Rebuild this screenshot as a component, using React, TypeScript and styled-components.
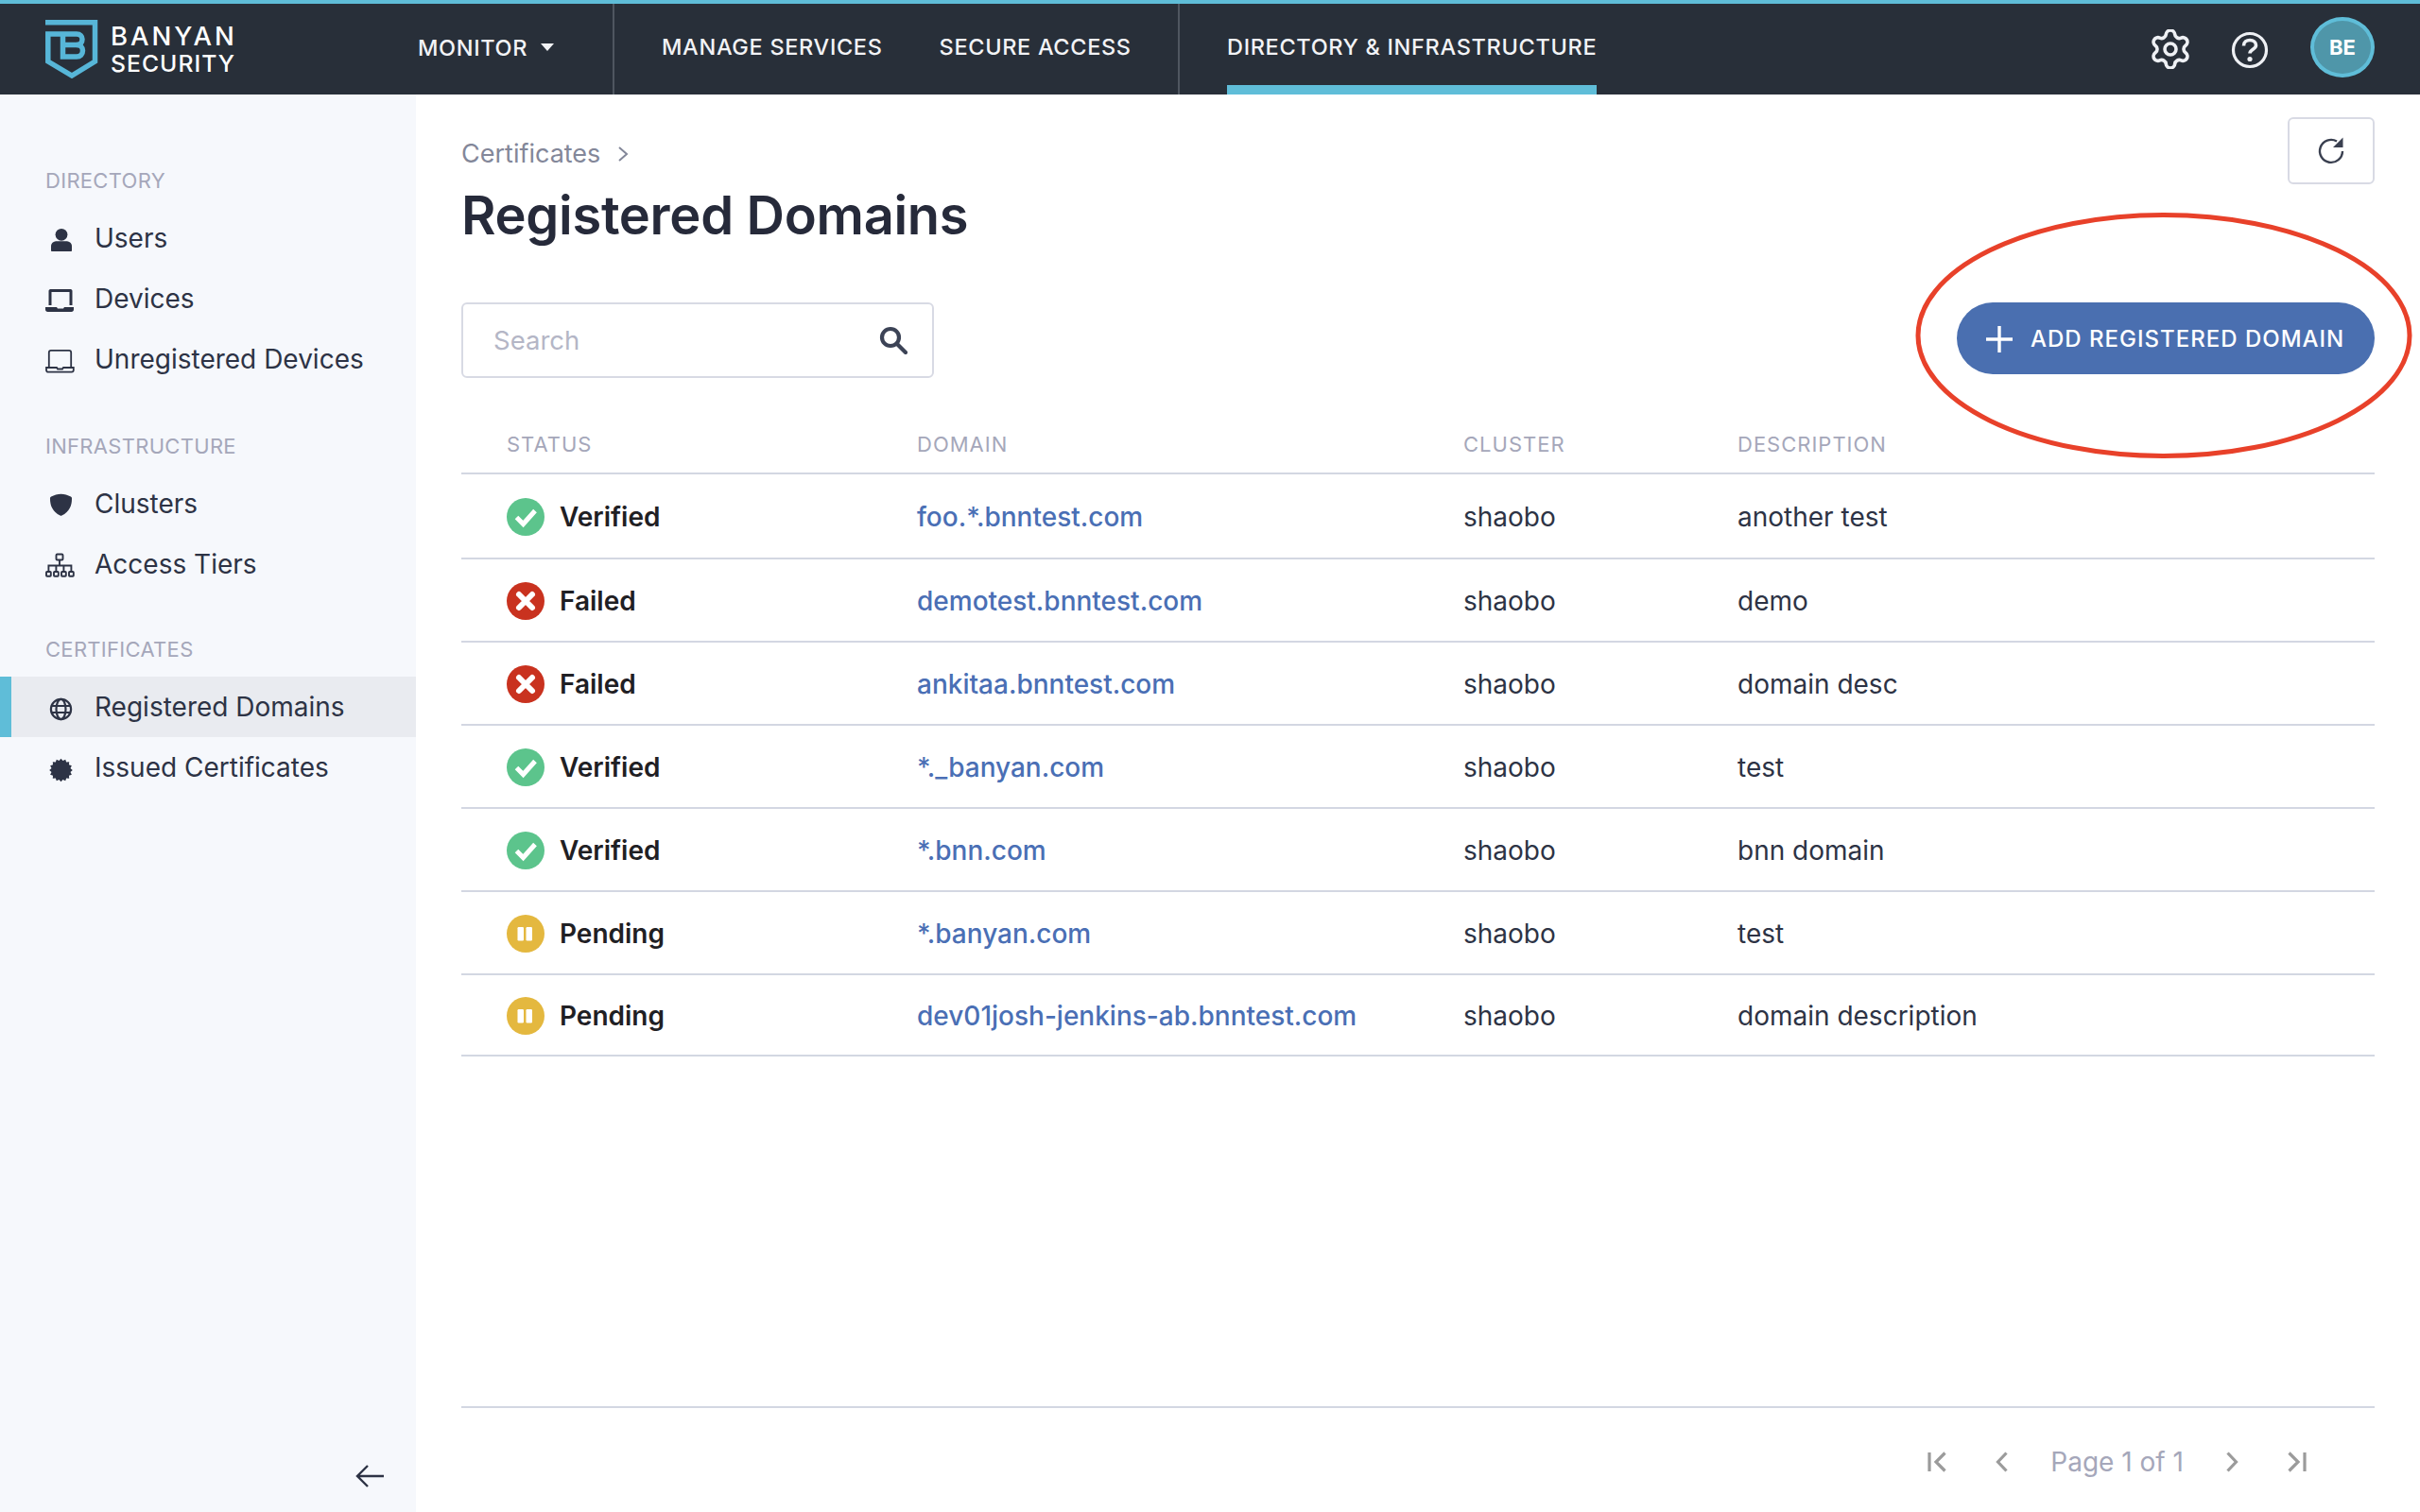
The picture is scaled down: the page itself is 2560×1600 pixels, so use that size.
import React from "react";
import styled, { createGlobalStyle } from "styled-components";

const GlobalStyle = createGlobalStyle`
  html, body { margin: 0; padding: 0; background: #fff; }
  body { font-family: "Inter", "Liberation Sans", sans-serif; -webkit-font-smoothing: antialiased; }
  * { box-sizing: border-box; }
`;

const Page = styled.div`
  position: relative;
  width: 2560px;
  height: 1600px;
  display: flex;
  flex-direction: column;
  overflow: hidden;
  background: #fff;
`;

const Header = styled.header`
  height: 100px;
  flex: none;
  display: flex;
  align-items: stretch;
  background: #282f39;
  border-top: 4px solid #5fbdd8;
  color: #f2f3f6;
`;

const Brand = styled.div`
  width: 442px;
  flex: none;
  display: flex;
  align-items: center;
  padding: 0 0 0 48px;
  gap: 13px;
`;

const BrandText = styled.div`
  display: flex;
  flex-direction: column;
  color: #fff;
`;

const BrandTop = styled.span`
  font-size: 27.5px;
  font-weight: 500;
  letter-spacing: 3px;
  line-height: 30px;
`;

const BrandBottom = styled.span`
  font-size: 24.75px;
  font-weight: 500;
  letter-spacing: 1px;
  line-height: 28px;
`;

const NavGroup = styled.nav<{ $divider?: boolean; $width: number; $pad: number }>`
  width: ${(p) => p.$width}px;
  flex: none;
  display: flex;
  align-items: stretch;
  gap: 60px;
  padding-left: ${(p) => p.$pad}px;
  border-right: ${(p) => (p.$divider ? "2px solid #4f5660" : "none")};
`;

const NavItem = styled.div<{ $active?: boolean; $drop?: number }>`
  display: flex;
  align-items: center;
  gap: 14px;
  padding-top: ${(p) => p.$drop ?? 4}px;
  font-size: 23.5px;
  font-weight: 500;
  letter-spacing: 0.67px;
  color: #f2f3f6;
  white-space: nowrap;
  border-bottom: ${(p) => (p.$active ? "10px solid #5fbdd8" : "10px solid transparent")};
`;

const Caret = styled.span`
  width: 0;
  height: 0;
  border-left: 7px solid transparent;
  border-right: 7px solid transparent;
  border-top: 8px solid #f2f3f6;
`;

const HeaderTools = styled.div`
  margin-left: auto;
  display: flex;
  align-items: center;
  gap: 44px;
  padding: 0 48px 0 0;
`;

const ToolIcon = styled.svg<{ $shift?: number }>`
  display: block;
  color: #eef0f4;
  margin-top: ${(p) => p.$shift ?? 0}px;
`;

const Avatar = styled.div`
  width: 68px;
  height: 64px;
  margin-bottom: 4px;
  border-radius: 50%;
  background: #4f96a9;
  border: 4px solid #5fbdd8;
  display: flex;
  align-items: center;
  justify-content: center;
  color: #fff;
  font-size: 22px;
  font-weight: 700;
`;

const Body = styled.div`
  flex: 1;
  display: flex;
  min-height: 0;
`;

const Sidebar = styled.aside`
  position: relative;
  width: 440px;
  flex: none;
  background: #f6f8fc;
  padding-top: 73px;
  display: flex;
  flex-direction: column;
`;

const SectionLabel = styled.div<{ $gap?: number }>`
  height: 36px;
  line-height: 36px;
  margin-top: ${(p) => p.$gap ?? 0}px;
  margin-bottom: 11px;
  padding-left: 48px;
  font-size: 22px;
  color: #a5a7ba;
  letter-spacing: 0.3px;
`;

const SideItem = styled.div<{ $active?: boolean }>`
  height: 64px;
  display: flex;
  align-items: center;
  padding-left: ${(p) => (p.$active ? 36 : 48)}px;
  gap: 20px;
  font-size: 28px;
  color: #2d3345;
  background: ${(p) => (p.$active ? "#e9ebf0" : "transparent")};
  border-left: ${(p) => (p.$active ? "12px solid #5fbdd8" : "none")};
`;

const SideIcon = styled.svg`
  width: 32px;
  height: 32px;
  flex: none;
  color: #2d3345;
  overflow: visible;
`;

const Collapse = styled.svg`
  position: absolute;
  left: 375px;
  bottom: 22px;
  color: #2d3345;
`;

const Main = styled.main`
  flex: 1;
  min-width: 0;
  display: flex;
  flex-direction: column;
  padding: 24px 48px 0;
`;

const TopRow = styled.div`
  height: 69px;
  display: flex;
  align-items: flex-start;
  justify-content: space-between;
`;

const Crumb = styled.div`
  display: flex;
  align-items: center;
  gap: 18px;
  padding-top: 17px;
  font-size: 27px;
  line-height: 44px;
  color: #838799;
`;

const RefreshButton = styled.button`
  width: 92px;
  height: 71px;
  padding: 0;
  background: #fff;
  border: 2px solid #d8dae4;
  border-radius: 6px;
  display: flex;
  align-items: center;
  justify-content: center;
  color: #3a4050;
`;

const Title = styled.h1`
  margin: 0;
  height: 70px;
  line-height: 70px;
  font-size: 56px;
  font-weight: 600;
  color: #262a3a;
  letter-spacing: -0.3px;
`;

const Toolbar = styled.div`
  margin-top: 57px;
  display: flex;
  align-items: flex-start;
  justify-content: space-between;
`;

const SearchBox = styled.div`
  width: 500px;
  height: 80px;
  display: flex;
  align-items: center;
  justify-content: space-between;
  padding: 0 26px 0 32px;
  border: 2px solid #d8dae4;
  border-radius: 6px;
`;

const Placeholder = styled.span`
  font-size: 27.5px;
  color: #b4b6c6;
`;

const AddButton = styled.button`
  width: 442px;
  height: 76px;
  padding: 1px 0 0 31px;
  border: none;
  border-radius: 38px;
  background: #4a6fb0;
  color: #fff;
  display: flex;
  align-items: center;
  gap: 19px;
  font-family: "Inter", sans-serif;
  font-size: 24px;
  font-weight: 500;
  letter-spacing: 1px;
`;

const Table = styled.div`
  margin-top: 22px;
  display: flex;
  flex-direction: column;
`;

const Columns = "434px 578px 290px 1fr";

const HeadRow = styled.div`
  height: 80px;
  display: grid;
  grid-template-columns: ${Columns};
  align-items: center;
  padding: 18px 0 0 48px;
  border-bottom: 2px solid #d3d7e2;
  font-size: 22px;
  letter-spacing: 1px;
  color: #a5a7ba;
`;

const Row = styled.div<{ $h: number }>`
  height: ${(p) => p.$h}px;
  display: grid;
  grid-template-columns: ${Columns};
  align-items: center;
  padding: 2px 0 0 48px;
  border-bottom: 2px solid #d3d7e2;
  font-size: 28px;
  color: #2d3345;
`;

const StatusCell = styled.div`
  display: flex;
  align-items: center;
  gap: 16px;
  font-weight: 600;
  color: #1f2024;
`;

const DomainLink = styled.a`
  color: #4a6fb5;
  font-weight: 500;
`;

const Footer = styled.div`
  margin-top: auto;
  height: 112px;
  display: flex;
  align-items: center;
  justify-content: flex-end;
  padding: 4px 72px 0 0;
  gap: 45px;
  border-top: 2px solid #d3d7e2;
`;

const PageText = styled.span`
  font-size: 28px;
  color: #a5a7ba;
`;

const PageIcon = styled.svg<{ $outer?: "left" | "right" }>`
  display: block;
  color: #9b9b9b;
  margin-right: ${(p) => (p.$outer === "left" ? 7 : 0)}px;
  margin-left: ${(p) => (p.$outer === "right" ? 7 : 0)}px;
`;

const Annotation = styled.svg`
  position: absolute;
  left: 2020px;
  top: 218px;
`;

type Status = "Verified" | "Failed" | "Pending";

const StatusIcon = ({ status }: { status: Status }) => {
  if (status === "Verified")
    return (
      <svg width="40" height="40" viewBox="0 0 40 40">
        <circle cx="20" cy="20" r="20" fill="#5cc48c" />
        <path d="M10.5 20.5 L17.5 27.5 L30 13.5" fill="none" stroke="#fff" strokeWidth="5" />
      </svg>
    );
  if (status === "Failed")
    return (
      <svg width="40" height="40" viewBox="0 0 40 40">
        <circle cx="20" cy="20" r="20" fill="#c9321f" />
        <path d="M13 13 L27 27 M27 13 L13 27" fill="none" stroke="#fff" strokeWidth="6" strokeLinecap="round" />
      </svg>
    );
  return (
    <svg width="40" height="40" viewBox="0 0 40 40">
      <circle cx="20" cy="20" r="20" fill="#e4b83f" />
      <rect x="11.5" y="13" width="6.5" height="14.5" rx="1.2" fill="#fff" />
      <rect x="20.5" y="13" width="6.5" height="14.5" rx="1.2" fill="#fff" />
    </svg>
  );
};

const rows: { status: Status; domain: string; desc: string; h: number }[] = [
  { status: "Verified", domain: "foo.*.bnntest.com", desc: "another test", h: 90 },
  { status: "Failed", domain: "demotest.bnntest.com", desc: "demo", h: 88 },
  { status: "Failed", domain: "ankitaa.bnntest.com", desc: "domain desc", h: 88 },
  { status: "Verified", domain: "*._banyan.com", desc: "test", h: 88 },
  { status: "Verified", domain: "*.bnn.com", desc: "bnn domain", h: 88 },
  { status: "Pending", domain: "*.banyan.com", desc: "test", h: 88 },
  { status: "Pending", domain: "dev01josh-jenkins-ab.bnntest.com", desc: "domain description", h: 86 },
];

const Logo = () => (
  <svg width="56" height="62" viewBox="0 0 56 62" fill="none" stroke="#57b6d8" strokeWidth="5.5">
    <path d="M0 2.8 H52.5 V44 L28 59 L2.8 44 V15 H33 C37 15 39 17.5 39 20.5 C39 24 37 26.5 33 26.5 H18.5" />
    <path d="M33 26.5 C37 26.5 39.5 29 39.5 32.5 C39.5 36.5 37 39 33 39 H18.5 V15" />
  </svg>
);

const badgePoints = Array.from({ length: 32 }, (_, i) => {
  const a = (i / 32) * Math.PI * 2;
  const r = i % 2 === 0 ? 12.3 : 10.2;
  return `${(16.5 + r * Math.cos(a)).toFixed(2)},${(19 + r * Math.sin(a)).toFixed(2)}`;
}).join(" ");

const icons: Record<string, React.ReactNode> = {
  user: (
    <g fill="currentColor">
      <circle cx="17" cy="12.3" r="6.4" />
      <path d="M6 29 V24.5 C6 21 9 19.3 12.5 19.3 H21.5 C25 19.3 28 21 28 24.5 V29 C28 29.6 27.5 30 27 30 H7 C6.5 30 6 29.6 6 29Z" />
    </g>
  ),
  device: (
    <g fill="currentColor" transform="translate(0 2)">
      <path fillRule="evenodd" d="M3.5 6 C3.5 4.6 4.6 4 6 4 H26 C27.4 4 28.5 4.6 28.5 6 V21 H25.5 V7 H6.5 V21 H3.5Z" />
      <path d="M0 23 H12 L13 24.5 H19 L20 23 H30 V25.5 C30 27 29 28 27.5 28 H2.5 C1 28 0 27 0 25.5Z" />
    </g>
  ),
  unreg: (
    <g fill="none" stroke="currentColor" strokeWidth="1.8" transform="translate(0 2)">
      <path d="M3.8 22 V7 C3.8 5.5 4.8 4.8 6 4.8 H25 C26.2 4.8 27.2 5.5 27.2 7 V22" />
      <path d="M1 23 H12 L13 24.5 H18 L19 23 H29.8 V25.5 C29.8 26.8 29 27.6 27.8 27.6 H3 C1.8 27.6 1 26.8 1 25.5Z" />
    </g>
  ),
  shield: (
    <path
      fill="currentColor"
      transform="translate(16.5 17) scale(.9) translate(-16 -16)"
      d="M16 3.5 C20 3.5 24 4.8 27.5 6.5 C28.5 7 28.8 7.8 28.8 8.8 C28.8 17 26 24.5 17 28.8 C16.3 29.1 15.7 29.1 15 28.8 C6 24.5 3.2 17 3.2 8.8 C3.2 7.8 3.5 7 4.5 6.5 C8 4.8 12 3.5 16 3.5Z"
    />
  ),
  tree: (
    <g fill="none" stroke="currentColor" strokeWidth="1.9" transform="translate(0 2)">
      <rect x="11.5" y="3.5" width="7" height="6" rx="1" />
      <rect x="1" y="22" width="4.8" height="4.8" rx="0.8" />
      <rect x="9" y="22" width="4.8" height="4.8" rx="0.8" />
      <rect x="17" y="22" width="4.8" height="4.8" rx="0.8" />
      <rect x="25" y="22" width="4.8" height="4.8" rx="0.8" />
      <path d="M15 9.5 V15.5 M3.4 22 V15.5 H27.4 V22 M11.4 15.5 V22 M19.4 15.5 V22" />
    </g>
  ),
  globe: (
    <g fill="none" stroke="currentColor" strokeWidth="2.2" transform="translate(0.5 2.5)">
      <circle cx="16" cy="16" r="10.6" />
      <ellipse cx="16" cy="16" rx="5" ry="10.6" />
      <path d="M5.4 12.5 H26.6 M5.4 19.5 H26.6" />
    </g>
  ),
  badge: <polygon fill="currentColor" points={badgePoints} />,
};

const NavEntry = ({ icon, label, active }: { icon: string; label: string; active?: boolean }) => (
  <SideItem $active={active}>
    <SideIcon viewBox="0 0 32 32">{icons[icon]}</SideIcon>
    {label}
  </SideItem>
);

export default function App() {
  return (
    <Page>
      <GlobalStyle />
      <Header>
        <Brand>
          <Logo />
          <BrandText>
            <BrandTop>BANYAN</BrandTop>
            <BrandBottom>SECURITY</BrandBottom>
          </BrandText>
        </Brand>
        <NavGroup $divider $width={208} $pad={0}>
          <NavItem $drop={6}>
            MONITOR <Caret />
          </NavItem>
        </NavGroup>
        <NavGroup $divider $width={598} $pad={50}>
          <NavItem>MANAGE SERVICES</NavItem>
          <NavItem>SECURE ACCESS</NavItem>
        </NavGroup>
        <NavGroup $width={500} $pad={50}>
          <NavItem $active>DIRECTORY &amp; INFRASTRUCTURE</NavItem>
        </NavGroup>
        <HeaderTools>
          <ToolIcon width="40" height="42" viewBox="2 1.5 20 21" fill="none" stroke="currentColor" strokeWidth="1.8" strokeLinejoin="round">
            <circle cx="12" cy="12" r="3" />
            <path d="M9.671 4.136a2.34 2.34 0 0 1 4.659 0 2.34 2.34 0 0 0 3.319 1.915 2.34 2.34 0 0 1 2.33 4.033 2.34 2.34 0 0 0 0 3.831 2.34 2.34 0 0 1-2.33 4.033 2.34 2.34 0 0 0-3.319 1.915 2.34 2.34 0 0 1-4.659 0 2.34 2.34 0 0 0-3.32-1.915 2.34 2.34 0 0 1-2.33-4.033 2.34 2.34 0 0 0 0-3.831A2.34 2.34 0 0 1 6.35 6.051a2.34 2.34 0 0 0 3.32-1.915" />
          </ToolIcon>
          <ToolIcon $shift={2} width="40" height="40" viewBox="0 0 40 40" fill="none" stroke="currentColor" strokeWidth="3.2">
            <circle cx="20" cy="20" r="17.5" />
            <path d="M13.5 15.5 C13.5 11.5 16.5 9.5 20 9.5 C24 9.5 26.5 12 26.5 15 C26.5 19 20 19.5 20 23.5" strokeWidth="3.6" />
            <circle cx="20" cy="29.5" r="2.6" fill="currentColor" stroke="none" />
          </ToolIcon>
          <Avatar>BE</Avatar>
        </HeaderTools>
      </Header>
      <Body>
        <Sidebar>
          <SectionLabel>DIRECTORY</SectionLabel>
          <NavEntry icon="user" label="Users" />
          <NavEntry icon="device" label="Devices" />
          <NavEntry icon="unreg" label="Unregistered Devices" />
          <SectionLabel $gap={42}>INFRASTRUCTURE</SectionLabel>
          <NavEntry icon="shield" label="Clusters" />
          <NavEntry icon="tree" label="Access Tiers" />
          <SectionLabel $gap={40}>CERTIFICATES</SectionLabel>
          <NavEntry icon="globe" label="Registered Domains" active />
          <NavEntry icon="badge" label="Issued Certificates" />
          <Collapse width="32" height="32" viewBox="0 0 32 32" fill="none" stroke="currentColor" strokeWidth="2.4">
            <path d="M31 16 H3 M14 5 L3 16 L14 27" />
          </Collapse>
        </Sidebar>
        <Main>
          <TopRow>
            <Crumb>
              Certificates
              <svg width="12" height="18" viewBox="0 0 12 18" fill="none" stroke="#838799" strokeWidth="2">
                <path d="M2 2 L10 9 L2 16" />
              </svg>
            </Crumb>
            <RefreshButton aria-label="refresh">
              <svg width="32" height="32" viewBox="0 0 32 32" fill="none">
                <path d="M22 5.5 A12 12 0 1 0 28 16" stroke="currentColor" strokeWidth="2.4" />
                <path d="M28.5 1.5 V12 H18Z" fill="currentColor" />
              </svg>
            </RefreshButton>
          </TopRow>
          <Title>Registered Domains</Title>
          <Toolbar>
            <SearchBox>
              <Placeholder>Search</Placeholder>
              <svg width="30" height="30" viewBox="0 0 30 30" fill="none" stroke="#3c4356" strokeWidth="4.2">
                <circle cx="12" cy="12" r="9" />
                <path d="M19 19 L28 28" strokeLinecap="round" />
              </svg>
            </SearchBox>
            <AddButton>
              <svg width="28" height="30" viewBox="0 0 28 30" stroke="#fff" strokeWidth="3.4">
                <path d="M14 1 V29 M0 15 H28" />
              </svg>
              ADD REGISTERED DOMAIN
            </AddButton>
          </Toolbar>
          <Table>
            <HeadRow>
              <span>STATUS</span>
              <span>DOMAIN</span>
              <span>CLUSTER</span>
              <span>DESCRIPTION</span>
            </HeadRow>
            {rows.map((r) => (
              <Row key={r.domain} $h={r.h}>
                <StatusCell>
                  <StatusIcon status={r.status} />
                  {r.status}
                </StatusCell>
                <DomainLink>{r.domain}</DomainLink>
                <span>shaobo</span>
                <span>{r.desc}</span>
              </Row>
            ))}
          </Table>
          <Footer>
            <PageIcon $outer="left" width="20" height="22" viewBox="0 0 20 22" fill="none" stroke="currentColor" strokeWidth="3.2">
              <path d="M2 1 V21 M18.5 1.5 L9 11 L18.5 20.5" />
            </PageIcon>
            <PageIcon width="13" height="22" viewBox="0 0 13 22" fill="none" stroke="currentColor" strokeWidth="3.2">
              <path d="M11.5 1.5 L2.5 11 L11.5 20.5" />
            </PageIcon>
            <PageText>Page 1 of 1</PageText>
            <PageIcon width="13" height="22" viewBox="0 0 13 22" fill="none" stroke="currentColor" strokeWidth="3.2">
              <path d="M1.5 1.5 L10.5 11 L1.5 20.5" />
            </PageIcon>
            <PageIcon $outer="right" width="20" height="22" viewBox="0 0 20 22" fill="none" stroke="currentColor" strokeWidth="3.2">
              <path d="M18 1 V21 M1.5 1.5 L11 11 L1.5 20.5" />
            </PageIcon>
          </Footer>
        </Main>
      </Body>
      <Annotation width="540" height="276" viewBox="0 0 540 276" fill="none">
        <ellipse cx="269" cy="137" rx="260" ry="127.5" stroke="#e8412a" strokeWidth="5" />
      </Annotation>
    </Page>
  );
}
